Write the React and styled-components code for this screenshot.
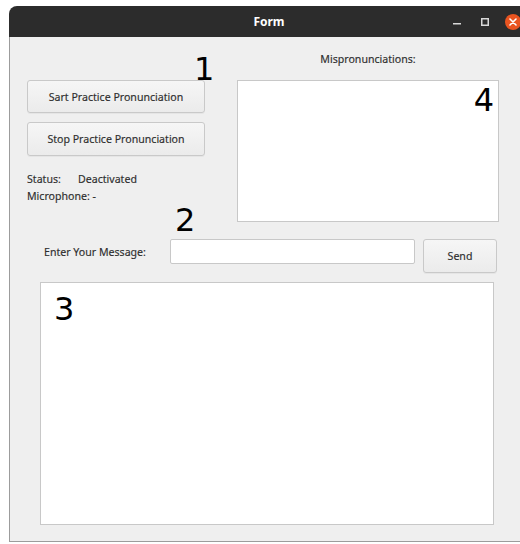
import React from 'react';
import styled, { createGlobalStyle } from 'styled-components';

const GlobalStyle = createGlobalStyle`
  html, body {
    margin: 0;
    padding: 0;
    background: #ffffff;
    overflow: hidden;
  }
  body {
    font-family: "Noto Sans", "DejaVu Sans", sans-serif;
  }
`;

const Desktop = styled.div`
  width: 520px;
  height: 544px;
  padding: 6px 0 0 9px;
  box-sizing: border-box;
  overflow: hidden;
`;

const Window = styled.div`
  width: 520px;
  display: flex;
  flex-direction: column;
`;

const TitleBar = styled.div`
  height: 31px;
  background: #2c2c2c;
  border-radius: 8px 8px 0 0;
  display: grid;
  grid-template-columns: 1fr auto 1fr;
  align-items: center;
  color: #ffffff;
`;

const Title = styled.span`
  grid-column: 2;
  font-size: 12px;
  font-weight: 700;
`;

const Controls = styled.div`
  grid-column: 3;
  justify-self: end;
  display: flex;
  align-items: center;
  gap: 12px;
  padding-right: 8px;
`;

const Control = styled.span`
  width: 16px;
  height: 16px;
  display: flex;
  align-items: center;
  justify-content: center;
`;

const CloseDot = styled(Control)`
  border-radius: 50%;
  background: #e95420;
`;

const Body = styled.div`
  position: relative;
  background: #efefef;
  border-left: 1px solid #9c9c9c;
  border-bottom: 1px solid #9c9c9c;
  height: 505px;
  box-sizing: border-box;
  padding: 0 0 0 17px;
  font-size: 10.6px;
  color: #2e2e2e;
  -webkit-text-stroke: 0.15px #2e2e2e;
`;

const TopRow = styled.div`
  position: relative;
  display: grid;
  grid-template-columns: 178px 262px;
  column-gap: 32px;
`;

const LeftCol = styled.div`
  display: flex;
  flex-direction: column;
  padding-top: 43px;
`;

const PushButton = styled.button`
  font: inherit;
  color: #2e2e2e;
  height: ${p => p.$h || 34}px;
  width: ${p => p.$w || 178}px;
  margin-bottom: ${p => p.$mb || 0}px;
  background: linear-gradient(#f6f6f6, #ebebeb);
  border: 1px solid #c9c9c9;
  border-radius: 3px;
  box-shadow: 0 1px 0 rgba(0, 0, 0, 0.04);
  padding: 0;
`;

const StatusBlock = styled.div`
  margin-top: 15px;
  line-height: 17px;
`;

const StatusLine = styled.div`
  display: flex;
`;

const StatusKey = styled.span`
  width: 51px;
`;

const RightCol = styled.div`
  padding-top: 14px;
  display: flex;
  flex-direction: column;
`;

const Caption = styled.div`
  text-align: center;
  line-height: 16px;
  margin-bottom: 13px;
`;

const Pane = styled.div`
  position: relative;
  background: #ffffff;
  border: 1px solid #c8c8c8;
  box-sizing: border-box;
  width: ${p => p.$w}px;
  height: ${p => p.$h}px;
  margin-left: ${p => p.$ml || 0}px;
`;

const Marker = styled.span`
  position: absolute;
  font-family: "DejaVu Sans", sans-serif;
  font-size: 32px;
  line-height: 32px;
  color: #000000;
  -webkit-text-stroke: 0;
  top: ${p => p.$top}px;
  left: ${p => (p.$left === undefined ? 'auto' : `${p.$left}px`)};
  right: ${p => (p.$right === undefined ? 'auto' : `${p.$right}px`)};
`;

const MessageRow = styled.div`
  position: relative;
  display: flex;
  align-items: flex-start;
  margin: 17px 0 9px 17px;
`;

const MessageLabel = styled.label`
  width: 126px;
  line-height: 26px;
`;

const MessageInput = styled.input`
  width: 245px;
  height: 25px;
  box-sizing: border-box;
  border: 1px solid #c8c8c8;
  border-radius: 2px;
  background: #ffffff;
  margin-right: 8px;
  outline: none;
`;

export default function App() {
  return (
    <>
      <GlobalStyle />
      <Desktop>
        <Window>
          <TitleBar>
            <Title>Form</Title>
            <Controls>
              <Control>
                <svg width="8" height="8" viewBox="0 0 8 8">
                  <rect x="0" y="5" width="8" height="1.5" fill="#d8d8d8" />
                </svg>
              </Control>
              <Control>
                <svg width="8" height="8" viewBox="0 0 8 8">
                  <rect x="0.75" y="0.75" width="6.5" height="6.5" fill="none" stroke="#d8d8d8" strokeWidth="1.5" />
                </svg>
              </Control>
              <CloseDot>
                <svg width="8" height="8" viewBox="0 0 8 8">
                  <path d="M1 1L7 7M7 1L1 7" stroke="#ffffff" strokeWidth="1.6" strokeLinecap="round" />
                </svg>
              </CloseDot>
            </Controls>
          </TitleBar>
          <Body>
            <TopRow>
              <LeftCol>
                <PushButton $h={33} $mb={9}>Sart Practice Pronunciation</PushButton>
                <PushButton $h={34}>Stop Practice Pronunciation</PushButton>
                <StatusBlock>
                  <StatusLine>
                    <StatusKey>Status:</StatusKey>
                    <span>Deactivated</span>
                  </StatusLine>
                  <StatusLine>
                    <span>Microphone: -</span>
                  </StatusLine>
                </StatusBlock>
              </LeftCol>
              <RightCol>
                <Caption>Mispronunciations:</Caption>
                <Pane $w={262} $h={142}>
                  <Marker $top={3} $right={4}>4</Marker>
                </Pane>
              </RightCol>
              <Marker $top={16} $left={167}>1</Marker>
            </TopRow>
            <MessageRow>
              <MessageLabel>Enter Your Message:</MessageLabel>
              <MessageInput type="text" />
              <PushButton $w={74} $h={34}>Send</PushButton>
              <Marker $top={-35} $left={131}>2</Marker>
            </MessageRow>
            <Pane $w={454} $h={243} $ml={13}>
              <Marker $top={10} $left={13}>3</Marker>
            </Pane>
          </Body>
        </Window>
      </Desktop>
    </>
  );
}
